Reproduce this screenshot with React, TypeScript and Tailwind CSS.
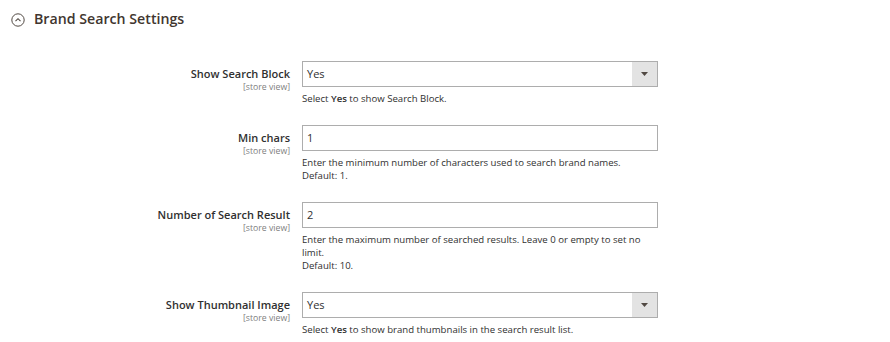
import React from "react";

const font = { fontFamily: '"Open Sans", "Liberation Sans", sans-serif' };

function Label({ text }: { text: string }) {
  return (
    <div className="w-[290px] shrink-0 text-right pt-[5px]">
      <div className="text-[11px] leading-[16px] font-semibold text-[#303030]">{text}</div>
      <div className="text-[8.7px] leading-[10px] text-[#808080]">[store view]</div>
    </div>
  );
}

function Select({ value }: { value: string }) {
  return (
    <div className="flex h-[26px] w-[356px] border border-[#adadad] bg-white">
      <div className="flex-1 pl-[4px] text-[11px] leading-[24px] text-[#303030]">{value}</div>
      <div className="flex w-[25px] items-center justify-center bg-[#e3e3e3]">
        <svg width="7" height="4" viewBox="0 0 7 4">
          <path d="M0 0 H7 L3.5 4 Z" fill="#514943" />
        </svg>
      </div>
    </div>
  );
}

function Input({ value }: { value: string }) {
  return (
    <div className="h-[26px] w-[356px] border border-[#adadad] bg-white pl-[4px] text-[11px] leading-[24px] text-[#303030]">
      {value}
    </div>
  );
}

function Note({ children }: { children: React.ReactNode }) {
  return <div className="mt-[5px] w-[356px] text-[9.6px] leading-[13px] text-[#303030]">{children}</div>;
}

export default function App() {
  return (
    <div className="h-[342px] w-[890px] bg-white" style={font}>
      <div className="flex items-center pl-[11px] pt-[9px]">
        <svg width="14" height="14" viewBox="0 0 14 14" className="mt-[2px]">
          <circle cx="7" cy="7" r="6.2" fill="none" stroke="#514943" strokeWidth="1" />
          <path d="M4.5 8.2 L7 5.7 L9.5 8.2" fill="none" stroke="#514943" strokeWidth="1.1" />
        </svg>
        <div className="ml-[9px] text-[14.2px] leading-[20px] font-semibold text-[#41362f]">Brand Search Settings</div>
      </div>
      <div className="mt-[32px] flex flex-col gap-[20px]">
        <div className="flex items-start">
          <Label text="Show Search Block" />
          <div className="ml-[12px]">
            <Select value="Yes" />
            <Note>
              Select <b className="font-semibold">Yes</b> to show Search Block.
            </Note>
          </div>
        </div>
        <div className="flex items-start">
          <Label text="Min chars" />
          <div className="ml-[12px]">
            <Input value="1" />
            <Note>
              Enter the minimum number of characters used to search brand names.
              <br />
              Default: 1.
            </Note>
          </div>
        </div>
        <div className="flex items-start">
          <Label text="Number of Search Result" />
          <div className="ml-[12px]">
            <Input value="2" />
            <Note>
              Enter the maximum number of searched results. Leave 0 or empty to set no limit.
              <br />
              Default: 10.
            </Note>
          </div>
        </div>
        <div className="flex items-start">
          <Label text="Show Thumbnail Image" />
          <div className="ml-[12px]">
            <Select value="Yes" />
            <Note>
              Select <b className="font-semibold">Yes</b> to show brand thumbnails in the search result list.
            </Note>
          </div>
        </div>
      </div>
    </div>
  );
}
